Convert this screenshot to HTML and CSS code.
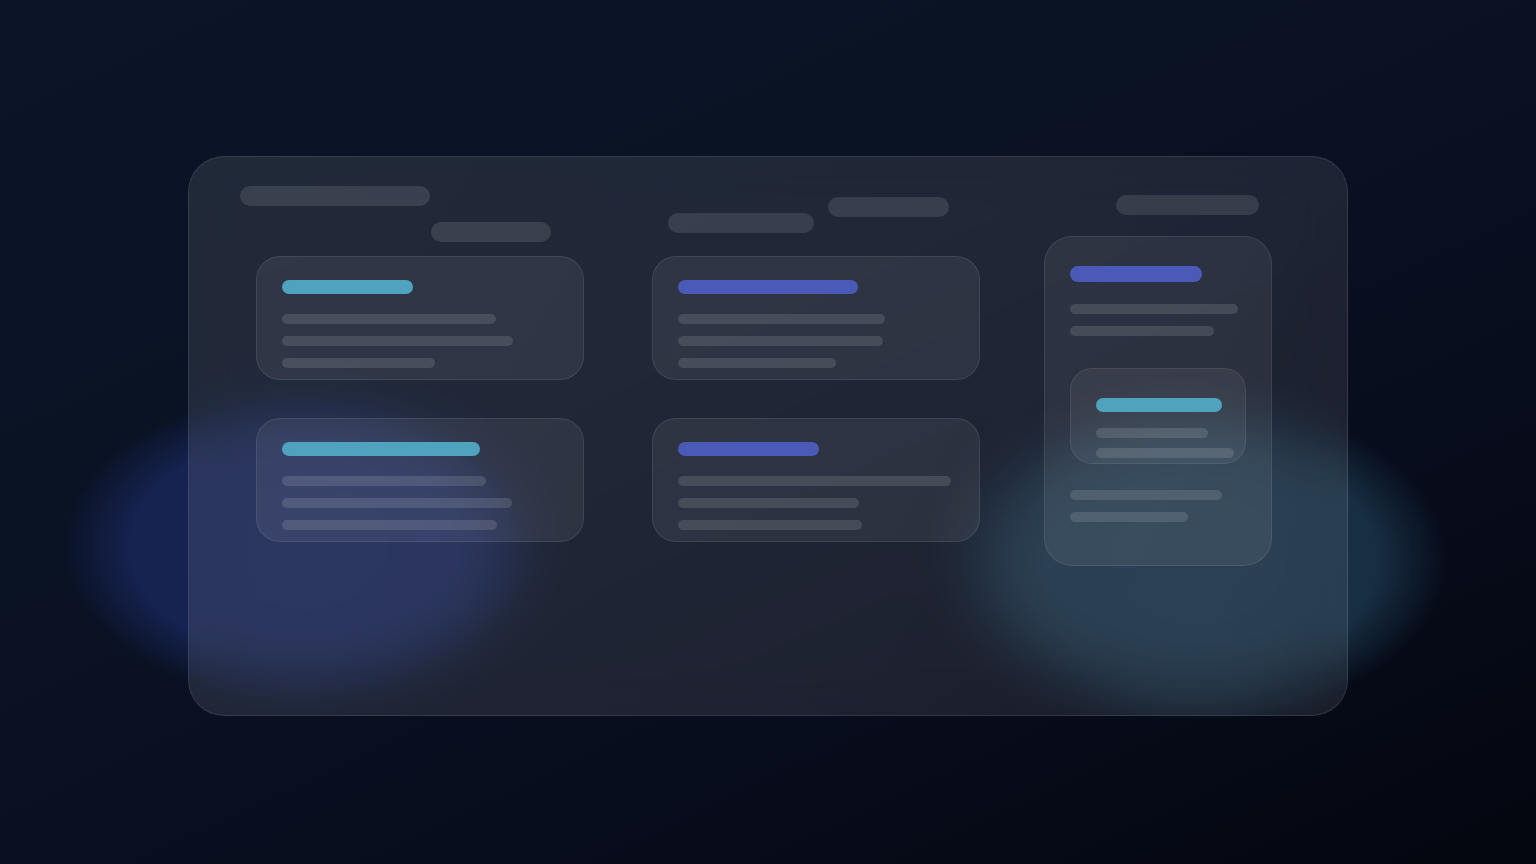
FILE: index.html
```html
<!DOCTYPE html>
<html lang="en">
<head>
<meta charset="utf-8">
<title>Glass board skeleton</title>
<link rel="stylesheet" href="styles.css">
</head>
<body>
<div class="page">
  <div class="panel">
    <div class="col col-1">
      <div class="bar" style="width:190px"></div>
      <div class="bar bar-2" style="width:120px"></div>
      <div class="card card-first">
        <div class="accent cyan" style="width:131px"></div>
        <div class="line" style="width:214px"></div>
        <div class="line" style="width:231px"></div>
        <div class="line" style="width:153px"></div>
      </div>
      <div class="card card-second">
        <div class="accent cyan" style="width:198px"></div>
        <div class="line" style="width:204px"></div>
        <div class="line" style="width:230px"></div>
        <div class="line" style="width:215px"></div>
      </div>
    </div>
    <div class="col col-2">
      <div class="head-2">
        <div class="bar bar-3" style="width:146px"></div>
        <div class="bar bar-4" style="width:121px"></div>
      </div>
      <div class="card card-first c2">
        <div class="accent purple" style="width:180px"></div>
        <div class="line" style="width:207px"></div>
        <div class="line" style="width:205px"></div>
        <div class="line" style="width:158px"></div>
      </div>
      <div class="card card-second">
        <div class="accent purple" style="width:141px"></div>
        <div class="line" style="width:273px"></div>
        <div class="line" style="width:181px"></div>
        <div class="line" style="width:184px"></div>
      </div>
    </div>
    <div class="col col-3">
      <div class="bar bar-5" style="width:143px"></div>
      <div class="tall">
        <div class="accent purple tall-accent" style="width:132px"></div>
        <div class="line tall-l1" style="width:168px"></div>
        <div class="line" style="width:144px"></div>
        <div class="inner">
          <div class="accent cyan" style="width:126px"></div>
          <div class="line inner-l1" style="width:112px"></div>
          <div class="line inner-l2" style="width:138px"></div>
        </div>
        <div class="line tall-l3" style="width:152px"></div>
        <div class="line" style="width:118px"></div>
      </div>
    </div>
  </div>
</div>
</body>
</html>
```

FILE: styles.css
```css
* { box-sizing: border-box; }
html, body { margin: 0; padding: 0; }
body {
  font-family: "Inter", "Liberation Sans", sans-serif;
  background: #070c18;
}
.page {
  width: 1536px;
  height: 864px;
  overflow: hidden;
  padding-top: 156px;
  padding-left: 188px;
  background:
    radial-gradient(ellipse 242px 155px at 305px 547px, rgb(23, 35, 80) 0%, rgb(22, 34, 80) 72%, rgba(22, 34, 80, 0.5) 86%, rgba(22, 34, 80, 0) 100%),
    radial-gradient(ellipse 250px 160px at 1197px 560px, rgb(24, 47, 68) 0%, rgb(23, 46, 67) 72%, rgba(23, 46, 67, 0.5) 86%, rgba(23, 46, 67, 0) 100%),
    linear-gradient(155deg, #0b1527 0%, #0a1224 40%, #080d1d 70%, #03060e 100%);
}
.panel {
  width: 1160px;
  height: 560px;
  border-radius: 36px;
  border: 1px solid rgba(255, 255, 255, 0.1);
  background: linear-gradient(120deg, rgba(255, 255, 255, 0.095) 0%, rgba(255, 255, 255, 0.09) 60%, rgba(255, 255, 255, 0.08) 100%);
  backdrop-filter: blur(24px);
  -webkit-backdrop-filter: blur(24px);
  display: grid;
  grid-template-columns: 328px 328px 228px;
  column-gap: 68px;
  padding-left: 67px;
}
.col-3 { margin-left: -4px; }
.col { display: flex; flex-direction: column; align-items: flex-start; }
.bar {
  height: 20px;
  border-radius: 10px;
  background: rgba(255, 255, 255, 0.11);
}
.col-1 { padding-top: 29px; }
.col-1 > .bar:first-child { margin-left: -16px; }
.bar-2 { margin-top: 16px; margin-left: 175px; }
.head-2 { display: flex; align-items: flex-start; margin-top: 40px; }
.bar-3 { margin-top: 16px; margin-left: 16px; }
.bar-4 { margin-left: 14px; }
.bar-5 { margin-top: 38px; margin-left: 72px; }

.card {
  width: 328px;
  height: 124px;
  border-radius: 24px;
  border: 1px solid rgba(255, 255, 255, 0.09);
  background: rgba(255, 255, 255, 0.065);
  padding: 23px 25px;
  display: flex;
  flex-direction: column;
  align-items: flex-start;
}
.card-first { margin-top: 14px; }
.c2 { margin-top: 23px; }
.card-second { margin-top: 38px; }
.accent {
  height: 14px;
  border-radius: 7px;
  flex: none;
}
.cyan { background: #4fa3be; }
.purple { background: #4a5ab6; }
.line {
  height: 10px;
  border-radius: 5px;
  background: rgba(255, 255, 255, 0.12);
  margin-top: 12px;
  flex: none;
}
.accent + .line { margin-top: 20px; }

.tall {
  margin-top: 21px;
  width: 228px;
  height: 330px;
  border-radius: 28px;
  border: 1px solid rgba(255, 255, 255, 0.09);
  background: rgba(255, 255, 255, 0.065);
  padding: 29px 25px;
  display: flex;
  flex-direction: column;
  align-items: flex-start;
}
.tall-accent { height: 16px; border-radius: 8px; }
.tall .accent + .line.tall-l1 { margin-top: 22px; }
.inner {
  margin-top: 32px;
  width: 176px;
  height: 96px;
  border-radius: 22px;
  border: 1px solid rgba(255, 255, 255, 0.08);
  background: rgba(255, 255, 255, 0.06);
  padding: 29px 25px 0;
  display: flex;
  flex-direction: column;
  align-items: flex-start;
}
.inner .accent + .line.inner-l1 { margin-top: 16px; }
.inner-l2 { margin-top: 10px; }
.tall-l3 { margin-top: 26px; }
```
